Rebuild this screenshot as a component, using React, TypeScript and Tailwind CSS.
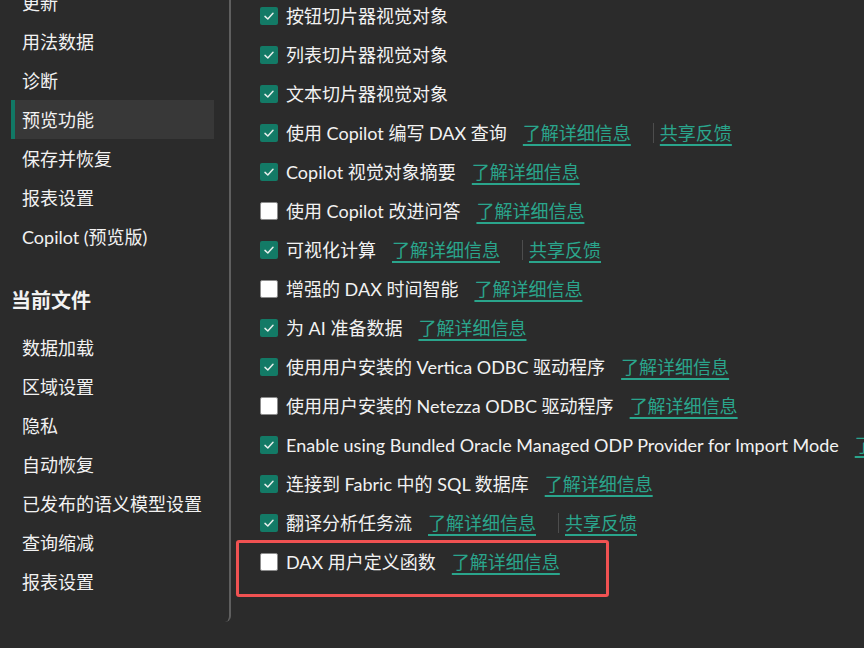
import React from "react";

type Row = {
    label: string;
    checked: boolean;
    learn?: boolean;
    share?: boolean;
};

const rows: Row[] = [
    { label: "按钮切片器视觉对象", checked: true },
    { label: "列表切片器视觉对象", checked: true },
    { label: "文本切片器视觉对象", checked: true },
    { label: "使用 Copilot 编写 DAX 查询", checked: true, learn: true, share: true },
    { label: "Copilot 视觉对象摘要", checked: true, learn: true },
    { label: "使用 Copilot 改进问答", checked: false, learn: true },
    { label: "可视化计算", checked: true, learn: true, share: true },
    { label: "增强的 DAX 时间智能", checked: false, learn: true },
    { label: "为 AI 准备数据", checked: true, learn: true },
    { label: "使用用户安装的 Vertica ODBC 驱动程序", checked: true, learn: true },
    { label: "使用用户安装的 Netezza ODBC 驱动程序", checked: false, learn: true },
    { label: "Enable using Bundled Oracle Managed ODP Provider for Import Mode", checked: true, learn: true },
    { label: "连接到 Fabric 中的 SQL 数据库", checked: true, learn: true },
    { label: "翻译分析任务流", checked: true, learn: true, share: true },
    { label: "DAX 用户定义函数", checked: false, learn: true },
];

const globalItems = ["更新", "用法数据", "诊断", "预览功能", "保存并恢复", "报表设置", "Copilot (预览版)"];
const fileItems = ["数据加载", "区域设置", "隐私", "自动恢复", "已发布的语义模型设置", "查询缩减", "报表设置"];

function NavItem({ label, active }: { label: string; active?: boolean }) {
    return (
        <div
            className={`h-[39px] flex items-center border-l-4 pl-[7px] leading-none whitespace-nowrap ${
                active ? "bg-[#383838] border-[#117865]" : "border-transparent"
            }`}
        >
            {label}
        </div>
    );
}

function Checkbox({ checked }: { checked: boolean }) {
    if (!checked) {
        return <div className="w-[18px] h-[18px] shrink-0 bg-white border border-[#8c8c8c] rounded-[2px]" />;
    }
    return (
        <div className="w-[18px] h-[18px] shrink-0 bg-[#137a66] rounded-[2px] flex items-center justify-center">
            <svg width="12" height="12" viewBox="0 0 12 12" fill="none">
                <path d="M2 6.4 L4.8 9 L10 3.2" stroke="#e6efec" strokeWidth="1.5" strokeLinecap="round" strokeLinejoin="round" />
            </svg>
        </div>
    );
}

function Link({ text }: { text: string }) {
    return <span className="text-[#2aa58c] underline underline-offset-[4px] decoration-[1.5px] cursor-pointer">{text}</span>;
}

export default function App() {
    return (
        <div
            className="flex h-[648px] w-[864px] overflow-hidden bg-[#2b2b2b] text-[#f2f2f2] text-[18px]"
            style={{ fontFamily: '"Segoe UI", Lato, "Noto Sans CJK SC", sans-serif' }}
        >
            {/* Sidebar */}
            <aside className="w-[231px] h-[622px] shrink-0 border-r-2 border-r-[#5f5f5f] rounded-br-[6px] pl-[11px] pr-[15px]">
                <div className="-mt-[17px]">
                    {globalItems.map((item) => (
                        <NavItem key={item} label={item} active={item === "预览功能"} />
                    ))}
                    <div className="mt-6 mb-2 h-10 flex items-center text-[20px] font-bold leading-none">当前文件</div>
                    {fileItems.map((item, i) => (
                        <NavItem key={i} label={item} />
                    ))}
                </div>
            </aside>

            {/* Preview features list */}
            <main className="flex-1 min-w-0 overflow-hidden pl-[29px]">
                <div className="-mt-[4px]">
                    {rows.map((row, i) => (
                        <div key={i} className="relative h-[39px] flex items-center gap-2 whitespace-nowrap leading-none">
                            <Checkbox checked={row.checked} />
                            <span>{row.label}</span>
                            {row.learn && (
                                <span className="ml-2">
                                    <Link text="了解详细信息" />
                                </span>
                            )}
                            {row.share && (
                                <span className="ml-[14px] flex items-center">
                                    <span className="w-px h-5 bg-[#4d4d4d] mr-[6px]" />
                                    <Link text="共享反馈" />
                                </span>
                            )}
                            {i === rows.length - 1 && (
                                <div className="absolute -left-[24px] top-[-2px] w-[373px] h-[57px] border-[3px] border-[#f05252] rounded-[3px] pointer-events-none" />
                            )}
                        </div>
                    ))}
                </div>
            </main>
        </div>
    );
}
